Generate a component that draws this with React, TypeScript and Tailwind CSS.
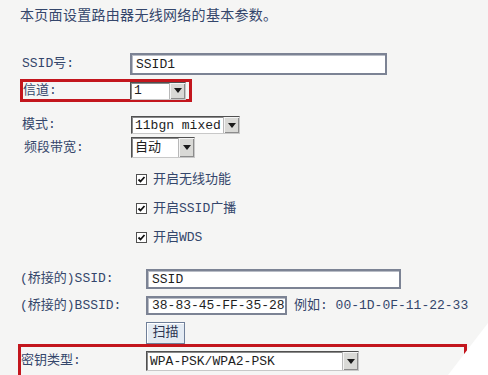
const font = "font-['Liberation_Mono','Noto_Sans_CJK_SC',monospace]";

function DropButton() {
  return (
    <span className="flex h-full w-[16px] items-center justify-center border-l border-[#b8b8b8] bg-[#d9d9d6] shadow-[inset_1px_1px_0_#f4f4f4,inset_-1px_-1px_0_#8c8c8c]">
      <svg width="8" height="5" viewBox="0 0 8 5">
        <path d="M0 0 L8 0 L4 5 Z" fill="#1a1a1a" />
      </svg>
    </span>
  );
}

function Select({ value, className }: { value: string; className: string }) {
  return (
    <div
      className={`flex items-stretch border border-[#505050] border-r-[#c8c8c8] border-b-[#c8c8c8] bg-white shadow-[inset_1px_1px_0_#8a8a8a] ${className}`}
    >
      <span className="flex flex-1 items-center truncate pl-[3px] text-[13px] leading-none text-[#1e1e1e]">{value}</span>
      <DropButton />
    </div>
  );
}

function Input({ value, className }: { value: string; className: string }) {
  return (
    <div
      className={`flex items-center border-2 border-[#7c8394] bg-white pl-[4px] text-[13px] leading-none text-[#1e1e1e] shadow-[inset_1px_1px_0_#b9bdc6] ${className}`}
    >
      {value}
    </div>
  );
}

function Check({ label }: { label: string }) {
  return (
    <div className="flex h-[29px] items-center pl-[116px]">
      <span className="flex h-[11px] w-[11px] items-center justify-center border border-[#505050] bg-white">
        <svg width="9" height="9" viewBox="0 0 9 9">
          <path d="M1.5 4.5 L3.5 6.5 L7.5 2" stroke="#111" strokeWidth="1.8" fill="none" />
        </svg>
      </span>
      <span className="ml-[6px] text-[13px] text-[#34466b]">{label}</span>
    </div>
  );
}

export default function App() {
  return (
    <div className={`relative h-[375px] w-[488px] overflow-hidden bg-[#f5f5f4] ${font}`}>
      <div className="pl-[20px]">
        {/* Titre */}
        <div className="pt-[7px] text-[14px] leading-[18px] tracking-[0.3px] text-[#34466b]">
          本页面设置路由器无线网络的基本参数。
        </div>

        {/* SSID */}
        <div className="mt-[28px] flex h-[22px] items-center">
          <span className="w-[110px] pl-[2px] text-[13px] text-[#34466b]">SSID号:</span>
          <Input value="SSID1" className="h-[22px] w-[257px]" />
        </div>

        {/* Canal */}
        <div className="mt-[4px] flex h-[23px] w-[172px] items-center border-[3px] border-[#c3161d]">
          <span className="w-[107px] text-[13px] text-[#34466b]">信道:</span>
          <Select value="1" className="h-[18px] w-[56px]" />
        </div>

        {/* Mode */}
        <div className="mt-[14px] flex h-[18px] items-center">
          <span className="w-[111px] pl-[2px] text-[13px] text-[#34466b]">模式:</span>
          <Select value="11bgn mixed" className="h-[18px] w-[109px]" />
        </div>

        {/* Bande */}
        <div className="mt-[3px] flex h-[21px] items-center">
          <span className="w-[111px] pl-[4px] text-[13px] text-[#34466b]">频段带宽:</span>
          <Select value="自动" className="h-[21px] w-[64px]" />
        </div>

        <div className="mt-[7px]">
          <Check label="开启无线功能" />
          <Check label="开启SSID广播" />
          <Check label="开启WDS" />
        </div>

        {/* Pont */}
        <div className="mt-[17px] flex h-[20px] items-center">
          <span className="w-[126px] text-[13px] text-[#34466b]">(桥接的)SSID:</span>
          <Input value="SSID" className="h-[20px] w-[255px]" />
        </div>

        <div className="mt-[7px] flex h-[19px] items-center">
          <span className="w-[126px] text-[13px] text-[#34466b]">(桥接的)BSSID:</span>
          <Input value="38-83-45-FF-35-28" className="h-[19px] w-[141px]" />
          <span className="ml-[7px] text-[13px] text-[#34466b]">例如: 00-1D-0F-11-22-33</span>
        </div>

        <div className="mt-[7px] flex h-[22px] items-center pl-[126px]">
          <button className="flex h-[22px] w-[39px] items-center justify-center border border-[#6f7f99] bg-[#e4ebf3] text-[13px] text-[#2a3350] shadow-[inset_1px_1px_0_#ffffff]">
            扫描
          </button>
        </div>

        {/* Clé */}
        <div className="-ml-[2px] flex h-[40px] w-[449px] items-start border-[3px] border-b-0 border-[#c3161d] pt-[4px]">
          <span className="flex h-[20px] w-[125px] items-center text-[13px] text-[#34466b]">密钥类型:</span>
          <Select value="WPA-PSK/WPA2-PSK" className="h-[20px] w-[213px]" />
        </div>
      </div>

      <svg className="absolute bottom-0 right-0" width="40" height="52" viewBox="0 0 40 52">
        <path d="M40 0 L40 52 L0 52 Z" fill="#ffffff" />
      </svg>
    </div>
  );
}
